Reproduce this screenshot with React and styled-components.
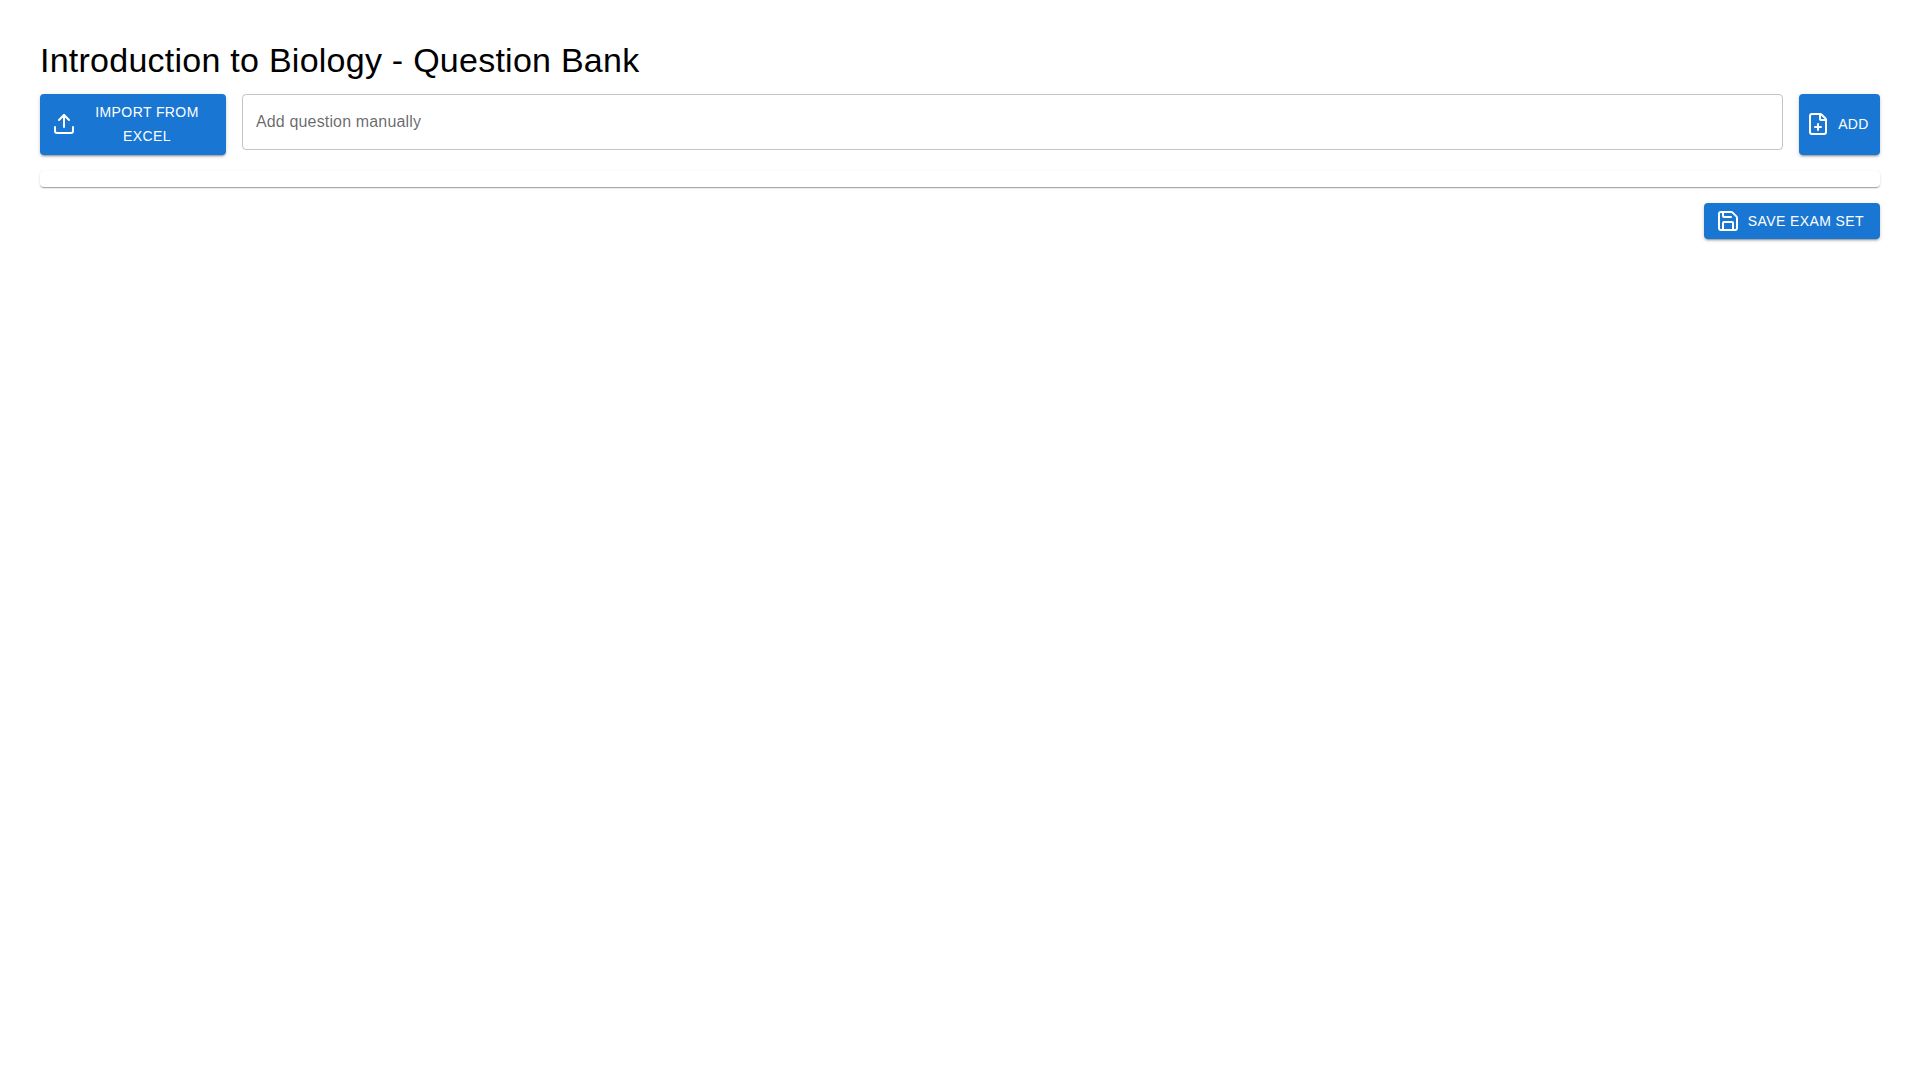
import React from 'react';
import styled, { createGlobalStyle } from 'styled-components';
import { FilePlus, Save, Upload } from 'lucide-react';

const GlobalStyle = createGlobalStyle`
*, *::before, *::after {
box-sizing: border-box;
}
body {
margin: 0;
background-color: white;
color: black;
font-family: 'Liberation Sans', Arial, sans-serif;
}
`

const Page = styled.main`
padding: 40px;
`

const Title = styled.h1`
margin: 0 0 0.35em;
font-size: 2.125rem;
font-weight: 400;
line-height: 1.235;
letter-spacing: 0.00735em;
`

const Toolbar = styled.div`
display: flex;
gap: 16px;
margin-bottom: 16px;
`

const Button = styled.button`
display: inline-flex;
align-items: center;
justify-content: center;
flex-shrink: 0;
width: ${props => props.$width || 'auto'};
min-width: 64px;
padding: 6px 16px;
border: none;
border-radius: 4px;
background-color: #1976d2;
color: white;
font-family: inherit;
font-size: 0.875rem;
font-weight: 500;
line-height: 1.75;
letter-spacing: 0.02857em;
text-transform: uppercase;
cursor: pointer;
box-shadow: 0px 3px 1px -2px rgba(0,0,0,0.2), 0px 2px 2px 0px rgba(0,0,0,0.14), 0px 1px 5px 0px rgba(0,0,0,0.12);
`

const StartIcon = styled.span`
display: inherit;
margin-left: -4px;
margin-right: 8px;
`

const QuestionInput = styled.input`
flex: 1;
min-width: 0;
height: 56px;
padding: 16.5px 13px;
border: 1px solid rgba(0,0,0,0.23);
border-radius: 4px;
background: none;
font-family: inherit;
font-size: 1rem;
letter-spacing: 0.00938em;
outline: none;

&::placeholder {
color: rgba(0,0,0,0.6);
opacity: 1;
}
`

const QuestionList = styled.ul`
list-style: none;
margin: 0 0 16px;
padding: 8px 0;
border-radius: 4px;
background-color: white;
box-shadow: 0px 2px 1px -1px rgba(0,0,0,0.2), 0px 1px 1px 0px rgba(0,0,0,0.14), 0px 1px 3px 0px rgba(0,0,0,0.12);
`

const Actions = styled.div`
display: flex;
justify-content: flex-end;
`

function App() {
    return (
      <Page>
        <GlobalStyle />
        <Title>Introduction to Biology - Question Bank</Title>
        <Toolbar>
          <Button $width="186px"><StartIcon><Upload /></StartIcon>Import from Excel</Button>
          <QuestionInput placeholder="Add question manually" />
          <Button $width="81px"><StartIcon><FilePlus /></StartIcon>Add</Button>
        </Toolbar>
        <QuestionList />
        <Actions>
          <Button><StartIcon><Save /></StartIcon>Save Exam Set</Button>
        </Actions>
      </Page>
    );
}

export default App;
